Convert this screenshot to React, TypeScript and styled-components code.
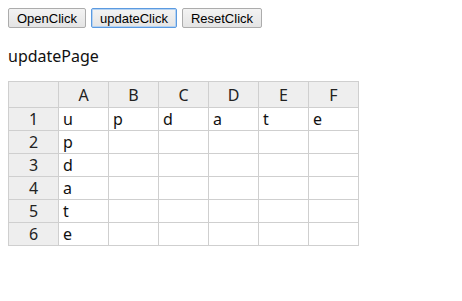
import React, { useState } from "react"
import styled, { createGlobalStyle } from "styled-components"

const GlobalStyle = createGlobalStyle`
    body {
        margin: 8px;
        background: #fff;
        font-family: "Noto Sans", "Open Sans", sans-serif;
        color: #111;
    }
`

const Toolbar = styled.div`
    display: flex;
    gap: 5px;
    height: 20px;
`

const Button = styled.button<{ $focused?: boolean }>`
    height: 20px;
    padding: 0 8px;
    font-family: "Liberation Sans", Arial, sans-serif;
    font-size: 13px;
    color: #000;
    background: linear-gradient(#f3f3f3, #e4e4e4);
    border: 1px solid ${(p) => (p.$focused ? "#5b9ae0" : "#acacac")};
    box-shadow: ${(p) => (p.$focused ? "inset 0 0 0 1px #b4d2f2" : "none")};
    border-radius: 2px;
    outline: none;
    cursor: pointer;
`

const Title = styled.div`
    margin-top: 17px;
    font-size: 16px;
    line-height: 22px;
    height: 22px;
`

const Sheet = styled.table`
    margin-top: 14px;
    border-collapse: collapse;
    font-size: 16px;
`

const HeadCell = styled.td`
    width: 49px;
    height: 25px;
    padding: 0;
    background: #eeeeee;
    border: 1px solid #cfcfcf;
    text-align: center;
    color: #222;
`

const RowHead = styled(HeadCell)`
    height: 22px;
`

const Cell = styled.td`
    width: 45px;
    height: 22px;
    padding: 0 0 0 4px;
    border: 1px solid #cfcfcf;
    text-align: left;
    line-height: 20px;
`

const word = "update"
const cols = ["A", "B", "C", "D", "E", "F"]

function App() {
    const [page, setPage] = useState("updatePage")

    const cellValue = (r: number, c: number) => {
        if (r === 0) return word[c] ?? ""
        if (c === 0) return word[r] ?? ""
        return ""
    }

    return (
        <>
            <GlobalStyle />
            <Toolbar>
                <Button onClick={() => setPage("openPage")}>OpenClick</Button>
                <Button $focused onClick={() => setPage("updatePage")}>updateClick</Button>
                <Button onClick={() => setPage("resetPage")}>ResetClick</Button>
            </Toolbar>
            <Title>{page}</Title>
            <Sheet>
                <tbody>
                    <tr>
                        <HeadCell />
                        {cols.map((c) => (
                            <HeadCell key={c}>{c}</HeadCell>
                        ))}
                    </tr>
                    {word.split("").map((_, r) => (
                        <tr key={r}>
                            <RowHead>{r + 1}</RowHead>
                            {cols.map((c, ci) => (
                                <Cell key={c}>{cellValue(r, ci)}</Cell>
                            ))}
                        </tr>
                    ))}
                </tbody>
            </Sheet>
        </>
    )
}

export default App
